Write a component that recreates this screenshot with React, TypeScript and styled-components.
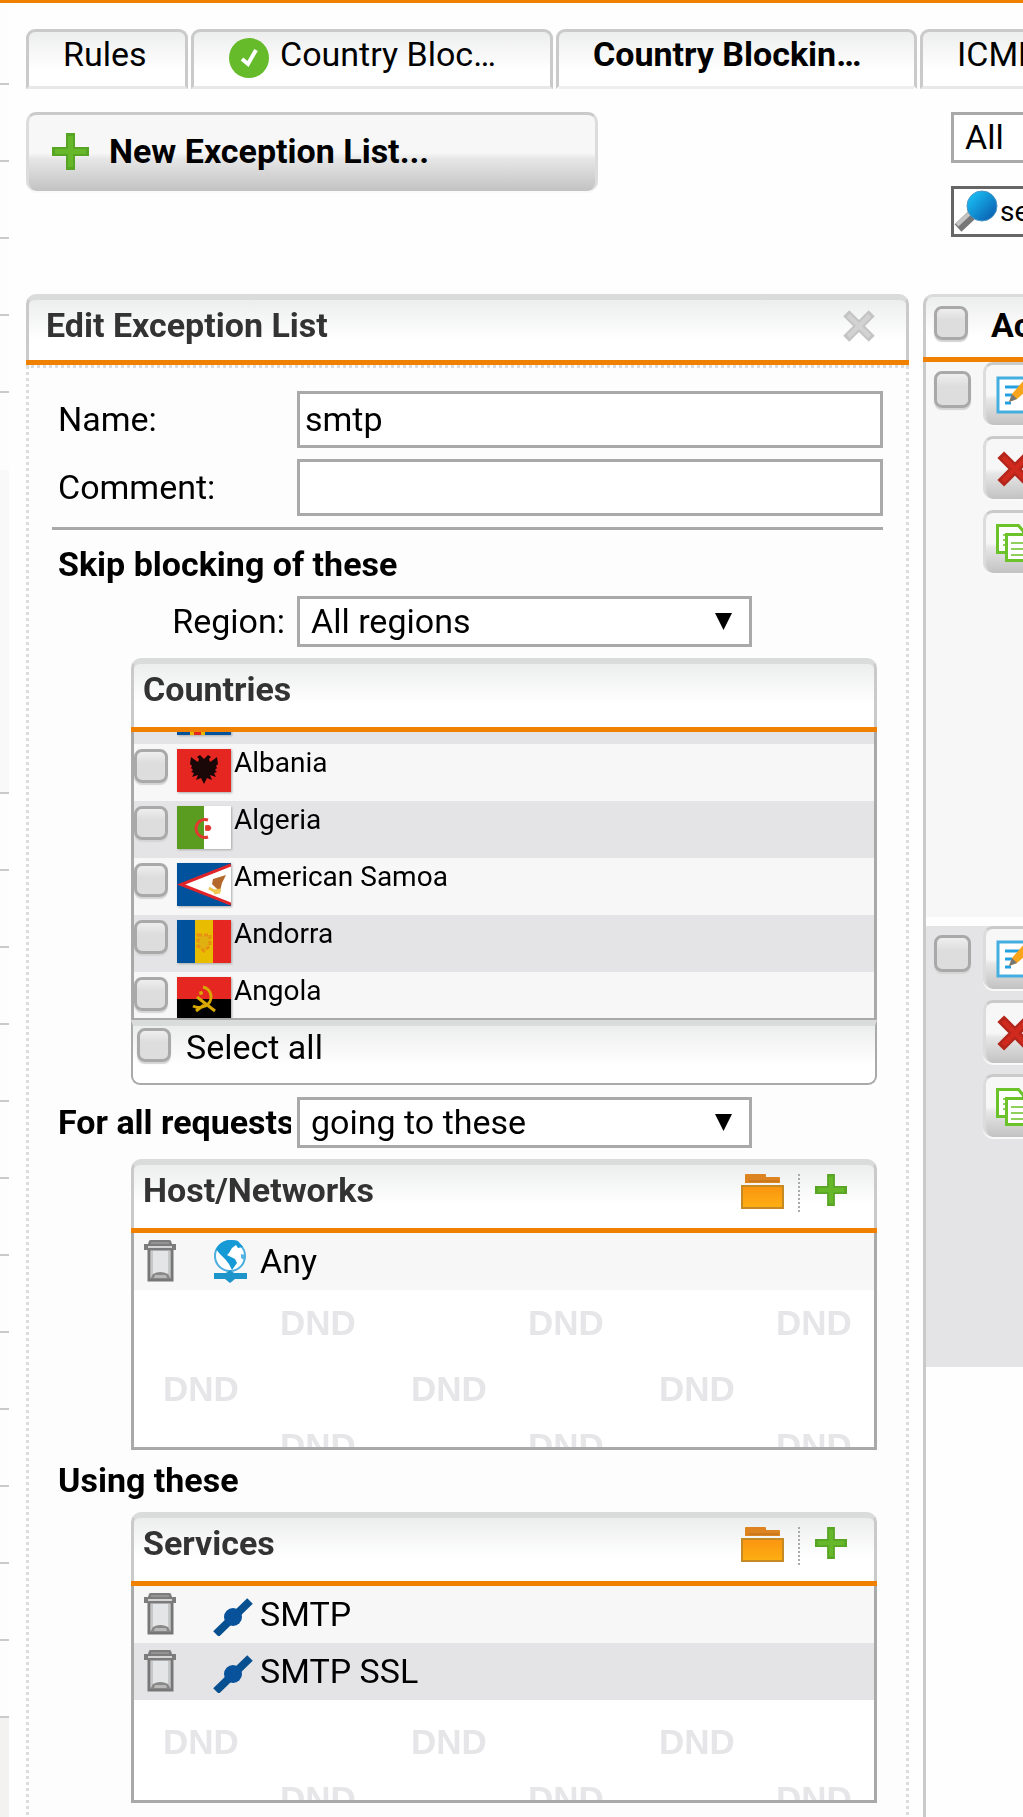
import React, { useLayoutEffect, useRef, useState } from "react";
import styled, { createGlobalStyle, css } from "styled-components";

const orange = "#f08000";
const line = "#a9a9a9";
const softLine = "#cacaca";
const oddRow = "#f7f7f7";
const evenRow = "#e4e4e6";

const GlobalStyle = createGlobalStyle`
  * { box-sizing: border-box; }
  body {
    margin: 0;
    background: #fefefe;
    color: #000;
    font: 34px/38px Roboto, "Liberation Sans", sans-serif;
  }
  button, input, select { font: inherit; color: inherit; margin: 0; }
`;

/* ---------- page frame ---------- */

const Page = styled.div`
  display: flex;
  height: 100vh;
  overflow: hidden;
  border-top: 3px solid ${orange};
`;

const MenuStrip = styled.nav`
  flex: 0 0 9px;
  padding-top: 5px;
  background: #fdfdfd;
`;

const MenuCell = styled.div`
  height: 77px;
  border-bottom: 2px solid ${softLine};
`;

const MenuBlock = styled.div`
  height: 324px;
  margin-top: 77px;
  background: #f9f9f9;
  border-bottom: 2px solid ${softLine};
`;

const MenuRest = styled.div`
  height: 110px;
  background: #f3f2f0;
`;

const Main = styled.main`
  flex: 1;
  min-width: 0;
  padding: 26px 0 0 17px;
`;

/* ---------- tabs ---------- */

const Tabs = styled.div`
  display: flex;
  gap: 3px;
  overflow: hidden;
`;

const Tab = styled.button<{ $width: number; $active?: boolean }>`
  flex: 0 0 ${(p) => p.$width}px;
  display: flex;
  align-items: flex-start;
  gap: 10px;
  height: 60px;
  padding: 3px 0 0 34px;
  white-space: nowrap;
  text-align: left;
  font-weight: ${(p) => (p.$active ? 700 : 400)};
  background: linear-gradient(#eceeed, #fff 38px);
  border: 3px solid ${softLine};
  border-bottom-color: ${(p) => (p.$active ? "transparent" : "#e8e8e8")};
  border-radius: 9px 9px 0 0;
`;

/* ---------- toolbar ---------- */

const Toolbar = styled.div`
  display: flex;
  justify-content: space-between;
  align-items: flex-start;
  height: 205px;
  padding-top: 23px;
  overflow: hidden;
`;

const raised = css`
  background: linear-gradient(#f7f7f7 50%, #e6e6e6 58%, #c2c2c2);
  border: solid #dcdcdc;
  border-width: 3px 3px 0;
  border-top-color: ${softLine};
  border-radius: 10px;
  box-shadow: 0 2px 0 #f9f9f9;
`;

const NewButton = styled.button`
  ${raised}
  display: flex;
  align-items: center;
  gap: 20px;
  width: 572px;
  height: 79px;
  padding: 0 0 4px 23px;
  font-weight: 700;
`;

const Filters = styled.div`
  flex: 0 0 72px;
  min-width: 0;
  display: flex;
  flex-direction: column;
  align-items: flex-start;
  gap: 23px;
`;

const SearchBox = styled.label`
  display: flex;
  align-items: center;
  width: 220px;
  height: 51px;
  background: #fff;
  border: 3px solid #666;
  font-size: 28px;
`;

const SearchInput = styled.input`
  width: 160px;
  padding: 0;
  border: 0;
  outline: 0;
  background: none;
`;

/* ---------- form controls ---------- */

const SelectWrap = styled.div<{ $width: number }>`
  position: relative;
  width: ${(p) => p.$width}px;
  height: 51px;
`;

const Select = styled.select`
  appearance: none;
  width: 100%;
  height: 51px;
  padding: 0 48px 2px 11px;
  background: #fff;
  border: 3px solid ${line};
  border-radius: 0;
`;

const Arrow = styled.svg`
  position: absolute;
  right: 20px;
  top: 17px;
  pointer-events: none;
`;

const TextInput = styled.input`
  width: 100%;
  height: 57px;
  padding: 0 5px 2px;
  background: #fff;
  border: 3px solid ${line};
  border-radius: 0;
`;

const Check = styled.input.attrs({ type: "checkbox" })<{ $size?: number }>`
  appearance: none;
  flex: none;
  width: ${(p) => p.$size ?? 34}px;
  height: ${(p) => p.$size ?? 34}px;
  background: linear-gradient(#eee, #ddd 40%);
  border: 3px solid ${line};
  border-radius: 8px;
  box-shadow: 0 2px 1px #d4d4d4;
`;

/* ---------- panels ---------- */

const Columns = styled.div`
  display: grid;
  grid-template-columns: minmax(0, 883px) minmax(100px, 1fr);
  gap: 14px;
`;

const HeadShell = styled.header`
  border-bottom: 5px solid ${orange};
`;

const HeadFace = styled.div<{ $height: number; $band?: number; $pad?: number }>`
  display: flex;
  align-items: flex-start;
  height: ${(p) => p.$height}px;
  padding: ${(p) => 12 - (p.$band ?? 6)}px ${(p) => p.$pad ?? 9}px 0;
  background: linear-gradient(#eceeed, #fff 40px);
  border: solid ${softLine};
  border-width: ${(p) => p.$band ?? 6}px 3px 0;
  border-top-color: #dadcdb;
  border-radius: 10px 10px 0 0;
`;

const Title = styled.h2`
  flex: 1;
  margin: 0;
  font-size: 34px;
  line-height: 38px;
  color: #333;
`;

const HeadTools = styled.div`
  display: flex;
  padding: 3px 18px 0 0;
`;

const CloseTools = styled(HeadTools)`
  padding-right: 13px;
`;

const IconButton = styled.button`
  display: flex;
  align-self: flex-start;
  padding: 0;
  border: 0;
  background: none;
`;

const EditBody = styled.form`
  height: 1500px;
  padding: 23px 23px 0;
  background: #fdfdfd;
  border: 3px dotted #dcdcdc;
  border-bottom: 0;
`;

const Field = styled.div`
  display: grid;
  grid-template-columns: 239px minmax(0, 1fr);
  align-items: center;
  padding-left: 6px;
  margin-bottom: 11px;
`;

const FieldLabel = styled.label<{ $right?: boolean; $bold?: boolean }>`
  padding: 0 ${(p) => (p.$right ? 12 : 0)}px 2px 0;
  margin-right: ${(p) => (p.$right ? 0 : 6)}px;
  overflow: hidden;
  white-space: nowrap;
  text-align: ${(p) => (p.$right ? "right" : "left")};
  font-weight: ${(p) => (p.$bold ? 700 : 400)};
`;

const Divider = styled.hr`
  height: 3px;
  margin: 0 0 15px;
  border: 0;
  background: ${line};
`;

const SectionLabel = styled.h3`
  margin: 11px 0;
  padding: 0 0 2px 6px;
  font-size: 34px;
  line-height: 38px;
`;

const Box = styled.section`
  margin: 0 6px 11px 79px;
`;

const CountryList = styled.ul`
  height: 288px;
  margin: 0;
  padding: 0;
  list-style: none;
  overflow-y: auto;
  scrollbar-width: none;
  border: solid ${line};
  border-width: 0 3px 2px;
`;

const CountryRow = styled.li`
  display: flex;
  align-items: flex-start;
  height: 57px;
  padding-top: 5px;
  background: ${oddRow};
  &:nth-child(odd) { background: ${evenRow}; }
`;

const CountryLabel = styled.label`
  display: flex;
  align-items: flex-start;
  gap: 3px;
  margin-left: 9px;
  font-size: 28px;
  line-height: 28px;
`;

const Flag = styled.svg`
  filter: drop-shadow(1px 1px 1px #aaa);
`;

const SelectAll = styled.div`
  display: flex;
  align-items: flex-start;
  gap: 15px;
  height: 65px;
  padding: 2px 4px;
  background: linear-gradient(#eceeed, #fff 40px);
  border: 2px solid ${line};
  border-top: 6px solid #dadcdb;
  border-radius: 0 0 9px 9px;
  margin-bottom: 12px;
`;

const DropArea = styled.div`
  display: flex;
  flex-direction: column;
  height: 217px;
  background: #fff;
  border: 3px solid ${line};
  border-top: 0;
`;

const ItemRow = styled.div<{ $even?: boolean }>`
  flex: none;
  display: flex;
  align-items: flex-start;
  height: 57px;
  padding: 6px 9px;
  background: ${(p) => (p.$even ? evenRow : oddRow)};
`;

const ItemIcon = styled.span`
  display: flex;
  width: 47px;
  margin-left: 36px;
`;

const ItemName = styled.span`
  padding-top: 3px;
`;

const Hints = styled.div`
  flex: 1;
  min-height: 0;
  display: flex;
  flex-direction: column;
  justify-content: flex-end;
  overflow: hidden;
`;

const HintRow = styled.div<{ $height: number; $shifted?: boolean }>`
  flex: none;
  display: flex;
  gap: 172px;
  height: ${(p) => p.$height}px;
  padding: 14px 0 0 ${(p) => (p.$shifted ? 146 : 29)}px;
  overflow: hidden;
  font: 700 35px/38px "Liberation Sans", sans-serif;
  color: #e6e6e8;
`;

const Hint = styled.span`
  flex: 0 0 76px;
`;

const Separator = styled.span`
  height: 38px;
  margin: 0 15px 0 14px;
  border-left: 2px dotted #aaa;
`;

/* ---------- list on the right ---------- */

const ListPanel = styled.section`
  min-width: 0;
  height: 1600px;
  overflow: hidden;
`;

const ListHead = styled(HeadShell)`
  width: 320px;
`;

const ListTable = styled.table`
  width: 320px;
  height: 1540px;
  border-spacing: 0;
  table-layout: fixed;
  border-left: 3px solid ${softLine};
`;

const ListCell = styled.td<{ $height: number; $even?: boolean; $wide?: boolean }>`
  width: ${(p) => (p.$wide ? 260 : 57)}px;
  height: ${(p) => p.$height}px;
  padding: ${(p) => (p.$wide ? "0" : "9px 0 0 8px")};
  vertical-align: top;
  line-height: 0;
  background: ${(p) => (p.$even ? evenRow : oddRow)};
`;

const GapCell = styled.td<{ $height?: number }>`
  height: ${(p) => (p.$height ? `${p.$height}px` : "auto")};
  padding: 0;
`;

const ActionStack = styled.div`
  display: flex;
  flex-direction: column;
  gap: 11px;
`;

const ActionButton = styled.button`
  ${raised}
  display: flex;
  align-items: center;
  width: 160px;
  height: 63px;
  padding: 0 0 0 10px;
`;

const ListTitle = styled.span`
  padding-left: 23px;
  font-weight: 700;
  white-space: nowrap;
`;

/* ---------- drawings ---------- */

const Plus = ({ size }: { size: number }) => (
  <svg width={size} height={size} viewBox="0 0 37 37" aria-hidden="true">
    <path d="M14 0h9v14h14v9H23v14h-9V23H0v-9h14z" fill="#58a424" />
    <path d="M16 3h5v13h13v5H21v13h-5V21H3v-5h13z" fill="#66b82a" />
  </svg>
);

const CheckBadge = () => (
  <svg width="42" height="44" viewBox="0 0 42 44" aria-hidden="true">
    <circle cx="21" cy="23" r="20" fill="#66bb2a" />
    <path d="M14 24l6 5 8-14" fill="none" stroke="#fff" strokeWidth="4" />
  </svg>
);

const Cross = ({ size, color, inner }: { size: number; color: string; inner: string }) => (
  <svg width={size} height={size} viewBox="0 0 32 32" aria-hidden="true">
    <path d="M4 4l24 24M28 4L4 28" stroke={color} strokeWidth="8" />
    <path d="M6 6l20 20M26 6L6 26" stroke={inner} strokeWidth="4" />
  </svg>
);

const Magnifier = () => (
  <svg width="46" height="45" viewBox="0 0 46 45" aria-hidden="true">
    <defs>
      <linearGradient id="lens" x1="0" y1="0" x2="1" y2="1">
        <stop offset=".1" stopColor="#19c0f5" />
        <stop offset=".9" stopColor="#0a5fb0" />
      </linearGradient>
    </defs>
    <path d="M4 39L20 24" stroke="#777" strokeWidth="10" />
    <path d="M3 36L17 23" stroke="#c4c4c4" strokeWidth="4" />
    <circle cx="28" cy="17" r="15" fill="url(#lens)" stroke="#4c94c4" strokeWidth="1" />
  </svg>
);

const Folder = () => (
  <svg width="43" height="35" viewBox="0 0 43 35" aria-hidden="true">
    <defs>
      <linearGradient id="folder" x1="0" y1="0" x2="0" y2="1">
        <stop stopColor="#fb9410" />
        <stop offset="1" stopColor="#fdb012" />
      </linearGradient>
    </defs>
    <path d="M4 9V1q0-1 1-1h19q1 0 1 1v2h13q1 0 1 1v5z" fill="#dd8420" />
    <path d="M8 7h30" stroke="#b86c1c" strokeWidth="1" />
    <rect x="1" y="12" width="41" height="22" fill="url(#folder)" stroke="#c58a24" strokeWidth="2" />
  </svg>
);

const Trash = () => (
  <svg width="34" height="43" viewBox="0 0 34 43" aria-hidden="true">
    <path d="M6 10h23v31H6z" fill="#e3e5e6" stroke="#777" strokeWidth="3" />
    <path d="M9 12v25M26 12v25" stroke="#aaa" strokeWidth="1" />
    <path d="M7 40l3-5q7-4 15 0l3 5z" fill="#888" />
    <path d="M12 36h11l1 3H11z" fill="#b8b8b8" />
    <path d="M6 2q0-1 2-1h18q2 0 2 1l1 3h4v6H1V5h4z" fill="#7c7c7c" />
    <path d="M5 7h24v2H5z" fill="#d4d4d4" />
    <path d="M8 4h18" stroke="#aaa" strokeWidth="1" />
  </svg>
);

const Globe = () => (
  <svg width="36" height="44" viewBox="0 0 36 44" aria-hidden="true">
    <circle cx="17" cy="17" r="15" fill="#fff" stroke="#4aaede" strokeWidth="2" />
    <path d="M6 6q5-5 12-5 5 0 7 1l5 6-5 1-2-3-4 3-3 5-2 2 8 4 2 4-5 7-3-6-4-5-6-6-3-4z" fill="#169ad6" />
    <path d="M28 15l4 1-1 5-3-2z" fill="#56b4e2" />
    <path d="M1 34h12l4-3 4 3h13v6H22l-5 4-5-4H1z" fill="#1d94ca" />
  </svg>
);

const ServicePlug = () => (
  <svg width="42" height="44" viewBox="0 0 42 44" aria-hidden="true">
    <path d="M3 42L37 9" stroke="#07508f" strokeWidth="8" />
    <circle cx="20" cy="25" r="9" fill="#07529a" />
  </svg>
);

const EditIcon = () => (
  <svg width="42" height="38" viewBox="0 0 42 38" aria-hidden="true">
    <rect x="2" y="2" width="38" height="34" fill="#fff" stroke="#44aee0" strokeWidth="3" />
    <path d="M9 11h17M9 19h7M9 27h6" stroke="#22a0e0" strokeWidth="3" />
    <path d="M13 26l3-8L28 4l8 6-15 13z" fill="#f9a41a" />
    <path d="M13 26l3-8 5 5z" fill="#777" />
  </svg>
);

const CopyIcon = () => (
  <svg width="42" height="38" viewBox="0 0 42 38" aria-hidden="true">
    <path d="M1.500 1.500h21l5 6v21h-26z" fill="#fff" stroke="#6cc22a" strokeWidth="3" />
    <path d="M7 11h4M7 16h4M7 21h4" stroke="#8fcf5c" strokeWidth="2" />
    <path d="M10.500 10.500h22l6 6v20h-28z" fill="#fff" stroke="#6cc22a" strokeWidth="3" />
    <path d="M15 19h19M15 25h19M15 31h19" stroke="#8fcf5c" strokeWidth="2" />
  </svg>
);

const flags: Record<string, React.ReactNode> = {
  aland: (
    <>
      <path d="M0 0h54v43H0z" fill="#00529c" />
      <path d="M13 0h15v43H13zM0 15h54v13H0z" fill="#e8b800" />
      <path d="M17 0h7v43h-7zM0 19h54v5H0z" fill="#e32620" />
    </>
  ),
  albania: (
    <>
      <path d="M0 0h54v43H0z" fill="#e62620" />
      <path
        d="M27 35l-3-6-5 2 2-5-6 2 2-4-3-1 2-2-2-2 1-2-2-2 1-7 4 3 3 2 1-3-2-2 3-2 4 4 4-4 3 2-2 2 1 3 3-2 4-3 1 7-2 2 1 2-2 2 2 2-3 1 2 4-6-2 2 5-5-2z"
        fill="#1a0808"
      />
    </>
  ),
  algeria: (
    <>
      <path d="M0 0h27v43H0z" fill="#5a9c20" />
      <path d="M27 0h27v43H27z" fill="#fff" />
      <path d="M31 14a9 9 0 1 0 0 17" fill="none" stroke="#e03a30" strokeWidth="3" />
      <path d="M35 22l-7-3 1 3-1 3z" fill="#e03a30" />
      <circle cx="31" cy="22" r="3" fill="#e03a30" />
    </>
  ),
  samoa: (
    <>
      <path d="M0 0h54v43H0z" fill="#00529c" />
      <path d="M54 2v39L4 21.500z" fill="#fff" />
      <path d="M54 2L4 21.500 54 41" fill="none" stroke="#e0242a" strokeWidth="3" />
      <path d="M36 16l13-4-4 8-2 8-4-3-4-4z" fill="#b4682c" />
      <path d="M32 25l5 3 7-1M37 30l6-1" stroke="#f0c850" strokeWidth="3" fill="none" />
    </>
  ),
  andorra: (
    <>
      <path d="M0 0h18v43H0z" fill="#00529c" />
      <path d="M18 0h18v43H18z" fill="#e8bc00" />
      <path d="M36 0h18v43H36z" fill="#e62620" />
      <path d="M21 15h12v11l-6 5-6-5z" fill="#e0b010" stroke="#e89010" strokeWidth="3" strokeDasharray="4 2" />
    </>
  ),
  angola: (
    <>
      <path d="M0 0h54v22H0z" fill="#e62620" />
      <path d="M0 22h54v21H0z" fill="#000" />
      <path d="M26 10a10 10 0 0 1 2 19q-6 3-12 0M20 20l18 14M19 34l8-6" fill="none" stroke="#d8a800" strokeWidth="3" />
      <circle cx="24" cy="16" r="2" fill="#d8a800" />
    </>
  ),
};

const countries = [
  { id: "aland" },
  { id: "albania", name: "Albania" },
  { id: "algeria", name: "Algeria" },
  { id: "samoa", name: "American Samoa" },
  { id: "andorra", name: "Andorra" },
  { id: "angola", name: "Angola" },
];

/* ---------- composed parts ---------- */

function DropDown({ id, label, options, width }: { id: string; label?: string; options: string[]; width: number }) {
  return (
    <SelectWrap $width={width}>
      <Select id={id} aria-label={label}>
        {options.map((o) => (
          <option key={o}>{o}</option>
        ))}
      </Select>
      <Arrow width="17" height="17" viewBox="0 0 17 17" aria-hidden="true">
        <path d="M0 0h17L8.500 17z" />
      </Arrow>
    </SelectWrap>
  );
}

function Countries() {
  const list = useRef<HTMLUListElement>(null);
  useLayoutEffect(() => {
    if (list.current) list.current.scrollTop = 45;
  }, []);
  return (
    <Box>
      <HeadShell>
        <HeadFace $height={69}>
          <Title>Countries</Title>
        </HeadFace>
      </HeadShell>
      <CountryList ref={list}>
        {countries.map((c) => (
          <CountryRow key={c.id}>
            <Check id={c.id} aria-label={c.name ? undefined : c.id} />
            <CountryLabel htmlFor={c.id}>
              <Flag width="54" height="43" viewBox="0 0 54 43" aria-hidden="true">
                {flags[c.id]}
              </Flag>
              {c.name}
            </CountryLabel>
          </CountryRow>
        ))}
      </CountryList>
      <SelectAll>
        <Check id="all" />
        <label htmlFor="all">Select all</label>
      </SelectAll>
    </Box>
  );
}

type Item = { name: string; icon: React.ReactNode };
type HintLine = { height: number; shifted?: boolean };

function DropBox({ title, items, hints }: { title: string; items: Item[]; hints: HintLine[] }) {
  return (
    <Box>
      <HeadShell>
        <HeadFace $height={69}>
          <Title>{title}</Title>
          <HeadTools>
            <IconButton type="button" aria-label="Browse">
              <Folder />
            </IconButton>
            <Separator />
            <IconButton type="button" aria-label="Add">
              <Plus size={32} />
            </IconButton>
          </HeadTools>
        </HeadFace>
      </HeadShell>
      <DropArea>
        {items.map((it, i) => (
          <ItemRow key={it.name} $even={i % 2 === 1}>
            <IconButton type="button" aria-label={`Remove ${it.name}`}>
              <Trash />
            </IconButton>
            <ItemIcon>{it.icon}</ItemIcon>
            <ItemName>{it.name}</ItemName>
          </ItemRow>
        ))}
        <Hints>
          {hints.map((h, i) => (
            <HintRow key={i} $height={h.height} $shifted={h.shifted}>
              <Hint>DND</Hint>
              <Hint>DND</Hint>
              <Hint>DND</Hint>
            </HintRow>
          ))}
        </Hints>
      </DropArea>
    </Box>
  );
}

function Actions() {
  return (
    <ActionStack>
      <ActionButton aria-label="Edit"><EditIcon /></ActionButton>
      <ActionButton aria-label="Delete"><Cross size={38} color="#b4261c" inner="#d02a1e" /></ActionButton>
      <ActionButton aria-label="Clone"><CopyIcon /></ActionButton>
    </ActionStack>
  );
}

export default function App() {
  const [name, setName] = useState("smtp");
  const [comment, setComment] = useState("");
  const [term, setTerm] = useState("search");
  return (
    <>
      <GlobalStyle />
      <Page>
        <MenuStrip>
          {Array.from({ length: 5 }, (_, i) => <MenuCell key={i} />)}
          <MenuBlock />
          {Array.from({ length: 12 }, (_, i) => <MenuCell key={i} />)}
          <MenuRest />
        </MenuStrip>
        <Main>
          <Tabs>
            <Tab $width={162}>Rules</Tab>
            <Tab $width={362}><CheckBadge />Country Bloc…</Tab>
            <Tab $width={361} $active>Country Blockin…</Tab>
            <Tab $width={162}>ICMP</Tab>
          </Tabs>
          <Toolbar>
            <NewButton><Plus size={37} />New Exception List...</NewButton>
            <Filters>
              <DropDown id="filter" label="Filter" options={["All"]} width={220} />
              <SearchBox>
                <Magnifier />
                <SearchInput aria-label="Search" value={term} onChange={(e) => setTerm(e.target.value)} />
              </SearchBox>
            </Filters>
          </Toolbar>
          <Columns>
            <section>
              <HeadShell>
                <HeadFace $height={66} $pad={17}>
                  <Title>Edit Exception List</Title>
                  <CloseTools>
                    <IconButton type="button" aria-label="Close">
                      <Cross size={34} color="#c4c4c4" inner="#d2d2d2" />
                    </IconButton>
                  </CloseTools>
                </HeadFace>
              </HeadShell>
              <EditBody>
                <Field>
                  <FieldLabel htmlFor="name">Name:</FieldLabel>
                  <TextInput id="name" value={name} onChange={(e) => setName(e.target.value)} />
                </Field>
                <Field>
                  <FieldLabel htmlFor="comment">Comment:</FieldLabel>
                  <TextInput id="comment" value={comment} onChange={(e) => setComment(e.target.value)} />
                </Field>
                <Divider />
                <SectionLabel>Skip blocking of these</SectionLabel>
                <Field>
                  <FieldLabel htmlFor="region" $right>Region:</FieldLabel>
                  <DropDown id="region" options={["All regions"]} width={455} />
                </Field>
                <Countries />
                <Field>
                  <FieldLabel htmlFor="direction" $bold>For all requests</FieldLabel>
                  <DropDown id="direction" options={["going to these"]} width={455} />
                </Field>
                <DropBox
                  title="Host/Networks"
                  items={[{ name: "Any", icon: <Globe /> }]}
                  hints={[{ height: 66, shifted: true }, { height: 57 }, { height: 34, shifted: true }]}
                />
                <SectionLabel>Using these</SectionLabel>
                <DropBox
                  title="Services"
                  items={[
                    { name: "SMTP", icon: <ServicePlug /> },
                    { name: "SMTP SSL", icon: <ServicePlug /> },
                  ]}
                  hints={[{ height: 57 }, { height: 34, shifted: true }]}
                />
              </EditBody>
            </section>
            <ListPanel>
              <ListHead>
                <HeadFace $height={63} $band={3} $pad={8}>
                  <Check aria-label="Select all lists" />
                  <ListTitle>Action</ListTitle>
                </HeadFace>
              </ListHead>
              <ListTable>
                <tbody>
                  <tr>
                    <ListCell $height={555}><Check $size={37} aria-label="Select first list" /></ListCell>
                    <ListCell $height={555} $wide><Actions /></ListCell>
                  </tr>
                  <tr><GapCell $height={9} colSpan={2} /></tr>
                  <tr>
                    <ListCell $height={441} $even><Check $size={37} aria-label="Select second list" /></ListCell>
                    <ListCell $height={441} $wide $even><Actions /></ListCell>
                  </tr>
                  <tr><GapCell colSpan={2} /></tr>
                </tbody>
              </ListTable>
            </ListPanel>
          </Columns>
        </Main>
      </Page>
    </>
  );
}
